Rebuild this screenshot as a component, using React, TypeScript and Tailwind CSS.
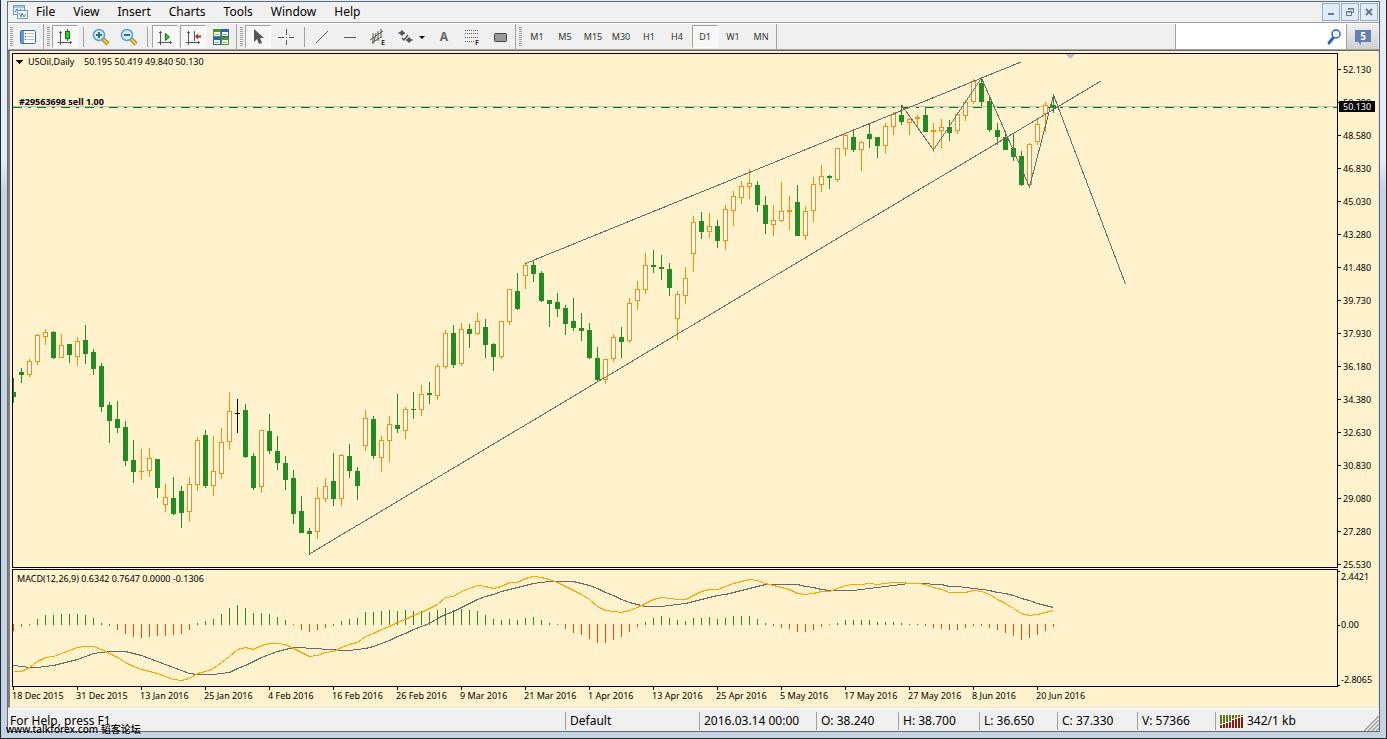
import type { ReactNode } from "react";
import clsx from "clsx";

type Candle = ["u" | "d" | "n", number, number, number, number];

// kind (up / down / neutral), high, body top, body bottom, low
const candles: Candle[] = [
    ["d", 378, 392, 397, 403], ["d", 368, 372, 375, 383], ["u", 359, 361, 375, 377],
    ["u", 334, 335, 362, 365], ["u", 329, 332, 337, 345], ["d", 331, 332, 358, 359],
    ["u", 334, 345, 358, 358], ["d", 344, 344, 355, 363], ["u", 337, 341, 357, 366],
    ["d", 325, 340, 354, 364], ["d", 349, 352, 369, 375], ["d", 363, 366, 407, 412],
    ["d", 402, 405, 421, 443], ["d", 401, 419, 428, 433], ["d", 421, 427, 461, 466],
    ["d", 440, 460, 472, 483], ["u", 449, 471, 472, 480], ["u", 448, 458, 471, 477],
    ["d", 459, 459, 488, 498], ["u", 484, 497, 505, 512], ["d", 477, 498, 514, 515],
    ["d", 486, 491, 513, 528], ["u", 477, 484, 512, 522], ["u", 437, 440, 485, 491],
    ["d", 430, 435, 486, 488], ["u", 436, 471, 486, 496], ["u", 428, 442, 474, 479],
    ["u", 392, 411, 442, 450], ["n", 399, 413, 414, 433], ["d", 404, 410, 457, 458],
    ["d", 453, 456, 488, 490], ["u", 430, 430, 487, 493], ["d", 414, 431, 451, 454],
    ["d", 436, 451, 463, 470], ["d", 456, 463, 480, 490], ["d", 470, 478, 514, 524],
    ["d", 496, 511, 533, 533], ["d", 528, 531, 534, 555], ["u", 487, 498, 532, 539],
    ["u", 478, 486, 499, 502], ["d", 453, 481, 499, 506], ["u", 454, 455, 499, 506],
    ["d", 444, 456, 471, 478], ["d", 467, 471, 486, 500], ["u", 410, 418, 446, 451],
    ["d", 416, 419, 456, 459], ["u", 436, 440, 458, 472], ["u", 416, 424, 441, 462],
    ["d", 394, 425, 429, 433], ["u", 407, 409, 431, 439], ["d", 392, 409, 410, 419],
    ["u", 385, 394, 410, 416], ["d", 382, 393, 395, 404], ["u", 364, 366, 396, 400],
    ["u", 330, 333, 367, 369], ["d", 325, 333, 365, 368], ["u", 323, 329, 364, 366],
    ["d", 324, 329, 334, 348], ["u", 313, 321, 334, 335], ["d", 319, 327, 345, 358],
    ["d", 343, 344, 357, 371], ["u", 321, 321, 357, 359], ["u", 289, 289, 322, 325],
    ["d", 273, 291, 309, 310], ["u", 262, 265, 276, 289], ["d", 261, 265, 274, 282],
    ["d", 271, 273, 301, 302], ["d", 300, 300, 304, 327], ["d", 293, 302, 309, 317],
    ["d", 305, 308, 324, 335], ["d", 298, 321, 328, 331], ["d", 313, 328, 331, 341],
    ["d", 323, 330, 358, 359], ["d", 347, 358, 380, 381], ["u", 359, 359, 380, 384],
    ["u", 334, 337, 359, 362], ["d", 327, 337, 342, 358], ["u", 298, 303, 341, 343],
    ["u", 281, 289, 301, 310], ["u", 253, 265, 290, 294], ["d", 250, 265, 267, 273],
    ["d", 255, 267, 269, 280], ["d", 263, 269, 288, 296], ["u", 291, 294, 319, 340],
    ["u", 267, 278, 296, 304], ["u", 216, 222, 254, 272], ["d", 212, 221, 232, 239],
    ["u", 213, 226, 232, 238], ["d", 220, 226, 241, 248], ["u", 205, 209, 241, 250],
    ["u", 191, 196, 211, 226], ["u", 181, 186, 198, 204], ["u", 169, 183, 187, 199],
    ["d", 181, 185, 205, 212], ["d", 196, 205, 224, 234], ["u", 205, 220, 225, 236],
    ["u", 182, 211, 221, 222], ["u", 196, 210, 212, 230], ["d", 185, 202, 236, 236],
    ["u", 206, 211, 236, 240], ["u", 177, 184, 211, 222], ["u", 165, 176, 185, 192],
    ["d", 175, 176, 178, 189], ["u", 148, 148, 180, 182], ["u", 133, 135, 149, 156],
    ["d", 129, 137, 150, 152], ["u", 141, 142, 150, 171], ["d", 123, 134, 139, 148],
    ["d", 137, 137, 146, 158], ["u", 123, 126, 146, 154], ["u", 112, 114, 127, 135],
    ["d", 105, 115, 122, 125], ["u", 118, 119, 123, 135], ["u", 115, 117, 119, 128],
    ["d", 107, 115, 132, 132], ["u", 123, 130, 132, 152], ["u", 119, 127, 131, 148],
    ["d", 120, 127, 133, 141], ["u", 112, 114, 131, 134], ["u", 100, 102, 116, 121],
    ["u", 79, 81, 102, 104], ["d", 78, 83, 102, 106], ["d", 97, 101, 130, 132],
    ["d", 123, 130, 137, 145], ["d", 134, 137, 150, 150], ["d", 134, 148, 157, 161],
    ["d", 151, 156, 185, 186], ["u", 143, 144, 185, 187], ["u", 120, 124, 142, 145],
    ["u", 102, 105, 114, 132], ["d", 96, 105, 108, 113],
];

// histogram: end of each bar, above 625 is positive
const histogram = [
    631, 627, 624, 619, 615, 615, 614, 614, 614, 615, 618, 623, 626, 630, 634, 637, 638, 637, 636, 636,
    635, 634, 630, 623, 621, 619, 614, 608, 605, 608, 613, 613, 614, 617, 620, 625, 630, 632, 630, 628,
    626, 621, 619, 618, 612, 612, 611, 610, 611, 610, 611, 611, 612, 610, 608, 610, 609, 610, 611, 615,
    619, 620, 619, 620, 618, 617, 620, 623, 625, 629, 633, 635, 639, 643, 643, 640, 637, 632, 627, 622,
    618, 616, 618, 620, 621, 618, 618, 617, 619, 618, 616, 616, 616, 619, 623, 626, 628, 629, 632, 632,
    630, 627, 625, 623, 620, 620, 620, 620, 622, 622, 622, 623, 624, 624, 626, 628, 629, 630, 630, 628,
    626, 626, 628, 630, 633, 636, 640, 638, 635, 631, 627,
];

const macdLine = [
    671, 671, 667, 661, 657, 656, 653, 650, 647, 646, 646, 649, 653, 657, 662, 666, 669, 671, 673, 676,
    679, 680, 678, 673, 671, 668, 662, 656, 649, 647, 649, 645, 643, 643, 644, 648, 652, 656, 655, 652,
    651, 647, 644, 642, 636, 633, 629, 626, 622, 619, 615, 612, 608, 604, 597, 596, 591, 588, 585, 586,
    588, 586, 582, 582, 578, 576, 577, 579, 582, 586, 590, 594, 599, 606, 610, 611, 612, 610, 607, 603,
    599, 597, 598, 599, 599, 595, 591, 589, 589, 586, 583, 581, 579, 580, 583, 585, 587, 589, 593, 594,
    593, 591, 591, 588, 585, 584, 584, 583, 584, 583, 582, 582, 583, 583, 584, 587, 589, 592, 592, 592,
    590, 591, 594, 599, 603, 608, 613, 615, 614, 612, 610,
];

const signalLine = [
    665, 666, 667, 667, 666, 665, 663, 661, 659, 656, 653, 652, 651, 651, 651, 653, 655, 658, 661, 664,
    667, 670, 673, 674, 674, 674, 673, 672, 668, 665, 661, 657, 654, 651, 649, 647, 647, 648, 648, 649,
    649, 650, 650, 649, 648, 646, 643, 640, 636, 633, 629, 626, 623, 618, 614, 611, 607, 603, 599, 596,
    594, 591, 589, 587, 585, 583, 582, 581, 581, 581, 581, 583, 585, 588, 592, 595, 599, 602, 604, 606,
    606, 606, 605, 604, 603, 601, 599, 597, 595, 594, 592, 590, 588, 586, 584, 584, 584, 584, 584, 586,
    587, 589, 590, 590, 590, 590, 589, 588, 587, 586, 585, 584, 583, 583, 583, 584, 584, 586, 586, 587,
    588, 589, 590, 592, 593, 595, 598, 600, 603, 605, 607,
];

const prices = [
    "52.130", "50.380", "48.580", "46.830", "45.030", "43.280", "41.480", "39.730",
    "37.930", "36.180", "34.380", "32.630", "30.830", "29.080", "27.280", "25.530",
];

const dates = [
    "18 Dec 2015", "31 Dec 2015", "13 Jan 2016", "25 Jan 2016", "4 Feb 2016", "16 Feb 2016",
    "26 Feb 2016", "9 Mar 2016", "21 Mar 2016", "1 Apr 2016", "13 Apr 2016", "25 Apr 2016",
    "5 May 2016", "17 May 2016", "27 May 2016", "8 Jun 2016", "20 Jun 2016",
];

const menus = ["File", "View", "Insert", "Charts", "Tools", "Window", "Help"];
const timeframes = ["M1", "M5", "M15", "M30", "H1", "H4", "D1", "W1", "MN"];

const colors = { u: "#ff8c00", d: "#228b22", n: "#000000" };

const barX = (i: number) => 13 + i * 8;

const toPoints = (values: number[]) =>
    values.map((y, i) => `${barX(i) + 0.5},${y + 0.5}`).join(" ");

function PricePlot() {
    return (
        <svg className="block h-[513px] w-full" shapeRendering="crispEdges">
            <g transform="translate(-13 -54)">
                <line x1="13" x2="9999" y1="106.5" y2="106.5" stroke="#c0c0c0" />
                <line x1="13" x2="9999" y1="107.5" y2="107.5" stroke="#008000" strokeDasharray="9 6 3 6" />
                <path d="M1066 54h9l-4 5h-1z" fill="#c0c0c0" />

                {candles.map(([kind, high, top, bottom, low], i) => {
                    const x = barX(i);
                    const color = colors[kind];
                    const hollow = kind === "u" && bottom - top > 2;
                    return (
                        <g key={i} fill={color}>
                            <rect x={x} y={high} width="1" height={low - high} />
                            <rect x={x - 2} y={top} width="5" height={bottom - top} />
                            {hollow && (
                                <rect x={x - 1} y={top + 1} width="3" height={bottom - top - 2} fill="#fff" />
                            )}
                        </g>
                    );
                })}

                <g fill="none" stroke="#696969">
                    <path d="M525.5 263.5L1021 62" />
                    <path d="M309.5 554L1101 81" />
                    <path d="M902 105.5L933.5 150L981.5 78L1029.5 187L1053.5 95L1125.5 284" />
                </g>

                <path d="M15 60h8l-4 4z" fill="#000" />
            </g>
            <g shapeRendering="auto">
                <text x="15" y="11" className="text-[9px]">USOil,Daily</text>
                <text x="71" y="11" className="text-[9px]">50.195 50.419 49.840 50.130</text>
                <text x="6" y="51" className="text-[9px] font-bold">#29563698 sell 1.00</text>
            </g>
        </svg>
    );
}

function MacdPlot() {
    return (
        <svg className="block h-[116px] w-full" shapeRendering="crispEdges">
            <g transform="translate(-13 -570)">
                {histogram.map((end, i) => {
                    const up = end < 625;
                    return (
                        <rect
                            key={i}
                            x={barX(i)}
                            y={up ? end : 624}
                            width="1"
                            height={up ? 625 - end : end - 624}
                            fill={up ? "#228b22" : "#ff4500"}
                        />
                    );
                })}
                <polyline points={toPoints(signalLine)} fill="none" stroke="#696969" />
                <polyline points={toPoints(macdLine)} fill="none" stroke="#ffa500" />
            </g>
            <text x="4" y="12" className="text-[9px]">
                MACD(12,26,9) 0.6342 0.7647 0.0000 -0.1306
            </text>
        </svg>
    );
}

function PriceAxis() {
    return (
        <svg className="block h-[515px] w-10 shrink-0 overflow-visible">
            {prices.map((price, i) => (
                <g key={price}>
                    <rect y={16 + i * 33} width="3" height="1" />
                    <text x="5" y={20 + i * 33} className="text-[9px]">{price}</text>
                </g>
            ))}
            <rect x="1" y="48" width="36" height="11" />
            <text x="5" y="57" className="text-[9px]" fill="#fff">50.130</text>
        </svg>
    );
}

function MacdAxis() {
    return (
        <svg className="block h-[118px] w-10 shrink-0 overflow-visible">
            <rect y="2" width="2" height="1" />
            <rect y="56" width="2" height="1" />
            <rect y="116" width="2" height="1" />
            <text x="3" y="11" className="text-[9px]">2.4421</text>
            <text x="3" y="59" className="text-[9px]">0.00</text>
            <text x="3" y="114" className="text-[9px]">-2.8065</text>
        </svg>
    );
}

function DateAxis() {
    return (
        <svg className="block h-[20px] w-full">
            {dates.map((date, i) => (
                <g key={date}>
                    <rect x={1 + i * 64} width="1" height="3" />
                    <text x={i * 64} y="12" className="text-[9px]">{date}</text>
                </g>
            ))}
        </svg>
    );
}

function Grip() {
    return (
        <div className="flex w-[6px] items-center pl-[2px]">
            <div className="h-[19px] w-[3px] bg-[repeating-linear-gradient(#a0a0a0_0_1px,#f0f0f0_1px_2px)]" />
        </div>
    );
}

function BandEnd() {
    return <div className="mx-px w-px bg-[#a0a0a0]" />;
}

function Divider() {
    return (
        <div className="flex w-2 items-center justify-center">
            <div className="h-5 w-px bg-[#a0a0a0]" />
        </div>
    );
}

interface ToolProps {
    label: string;
    active?: boolean;
    wide?: boolean;
    children: ReactNode;
}

function Tool({ label, active, wide, children }: ToolProps) {
    return (
        <button
            type="button"
            aria-label={label}
            aria-pressed={active}
            className={clsx(
                "flex h-[25px] items-center justify-center",
                wide ? "w-[38px]" : "w-7",
            )}
        >
            <span
                className={clsx(
                    "flex h-[23px] items-center justify-center border",
                    wide ? "w-[36px]" : "w-[26px]",
                    active
                        ? "border-t-[#a0a0a0] border-r-white border-b-white border-l-[#a0a0a0] bg-[#f7f7f7]"
                        : "border-transparent",
                )}
            >
                {children}
            </span>
        </button>
    );
}

function Icon({ children, w = 18 }: { children: ReactNode; w?: number }) {
    return (
        <svg width={w} height="18" viewBox={`0 0 ${w} 18`} fill="none" className="shrink-0">
            {children}
        </svg>
    );
}

function AxesGlyph() {
    return (
        <g fill="#555" shapeRendering="crispEdges">
            <rect x="4" y="3" width="1" height="14" />
            <rect x="2" y="14" width="14" height="1" />
            <rect x="3" y="4" width="3" height="1" />
            <rect x="14" y="13" width="1" height="3" />
        </g>
    );
}

function Magnifier({ plus }: { plus?: boolean }) {
    return (
        <Icon>
            <path d="M11 11l5 5" stroke="#a87b10" strokeWidth="4" />
            <path d="M11 11l5 5" stroke="#f2cf4a" strokeWidth="2" />
            <circle cx="7" cy="7" r="5.500" fill="#d4ecfa" stroke="#5a9fd0" strokeWidth="1.500" />
            <path d="M4 7h6" stroke="#2f6f96" strokeWidth="2" />
            {plus && <path d="M7 4v6" stroke="#2f6f96" strokeWidth="2" />}
        </Icon>
    );
}

function Toolbar() {
    return (
        <div className="flex h-[25px] bg-[#f0f0f0] pr-px">
            <Grip />
            <Tool label="Navigator">
                <Icon>
                    <rect x="1.500" y="2.500" width="15" height="13" rx="1" fill="#fff" stroke="#2f6fae" />
                    <rect x="2" y="3" width="3" height="12" fill="#5f9bd3" />
                    <path d="M6 5.500h1M6 8.500h1M6 11.500h1" stroke="#d00" />
                    <path d="M8 5.500h7M8 8.500h7M8 11.500h7" stroke="#b4bfca" />
                </Icon>
            </Tool>
            <BandEnd />
            <Grip />
            <Tool label="Candlesticks" active>
                <Icon>
                    <AxesGlyph />
                    <path d="M11.500 1v12" stroke="#067a06" />
                    <rect x="9.500" y="3.500" width="4" height="7" fill="#2fd12f" stroke="#067a06" />
                </Icon>
            </Tool>
            <Divider />
            <Tool label="Zoom in"><Magnifier plus /></Tool>
            <Tool label="Zoom out"><Magnifier /></Tool>
            <Divider />
            <Tool label="Auto scroll" active>
                <Icon>
                    <AxesGlyph />
                    <path d="M9.500 5.500v7l4-3.500z" fill="#2fd12f" stroke="#067a06" />
                </Icon>
            </Tool>
            <Tool label="Chart shift" active>
                <Icon>
                    <AxesGlyph />
                    <path d="M10.500 3v10" stroke="#2a6a9a" />
                    <path d="M11 8.500l3-3v2h3v2h-3v2z" fill="#b83200" />
                </Icon>
            </Tool>
            <Tool label="Tile windows">
                <Icon>
                    <path d="M1 1h8v8H1zM9 9h8v8H9z" fill="#4a9a1a" />
                    <path d="M9 1h8v8H9zM1 9h8v8H1z" fill="#2a5fc8" />
                    <path d="M2 4h6v4H2zM10 4h6v4h-6zM2 12h6v4H2zM10 12h6v4h-6z" fill="#f4faf0" />
                    <path d="M3 6.500h4M11 6.500h4M3 14.500h4M11 14.500h4" stroke="#8fb88a" />
                </Icon>
            </Tool>
            <BandEnd />
            <Grip />
            <Tool label="Cursor" active>
                <Icon>
                    <path d="M5 1v13l3-3 2 5 3-1-2-5h4z" fill="#555" />
                </Icon>
            </Tool>
            <Tool label="Crosshair">
                <Icon>
                    <path d="M1 9.500h6M12 9.500h5M9 9.500h1M9.500 1v6M9.500 12v5" stroke="#555" />
                </Icon>
            </Tool>
            <Divider />
            <Tool label="Trendline">
                <Icon><path d="M3 15L15 3" stroke="#555" /></Icon>
            </Tool>
            <Tool label="Horizontal line">
                <Icon><path d="M3 9.500h12" stroke="#555" /></Icon>
            </Tool>
            <Tool label="Equidistant channel">
                <Icon>
                    <path d="M1 12L14 3M3 15L12 9M4 5v11M7 5l-2 9M9 3v10M12 1v9" stroke="#555" />
                    <text x="12" y="17" fill="#333" className="text-[7px] font-bold">E</text>
                </Icon>
            </Tool>
            <Tool label="Arrows" wide>
                <Icon w={28}>
                    <path d="M5 2l3 3-3 3-3-3zM12 9l3 3-3 3-3-3z" fill="#555" />
                    <path d="M1 5h7M9 12h7" stroke="#555" />
                    <path d="M5 10l2 2 4-5" stroke="#555" strokeWidth="1.500" />
                    <path d="M22 8h6l-3 3z" fill="#000" />
                </Icon>
            </Tool>
            <Tool label="Text">
                <span className="text-xs font-bold text-[#666]">A</span>
            </Tool>
            <Tool label="Fibonacci">
                <Icon>
                    <path d="M2 2.500h13M2 5.500h13M2 9.500h13M2 13.500h9" stroke="#555" strokeDasharray="1 1" />
                    <text x="12" y="17" fill="#333" className="text-[7px] font-bold">F</text>
                </Icon>
            </Tool>
            <Tool label="Rectangle">
                <Icon>
                    <rect x="3.500" y="5.500" width="12" height="8" rx="1" fill="#999" stroke="#444" />
                </Icon>
            </Tool>
            <BandEnd />
            <Grip />
            {timeframes.map((tf) => (
                <Tool key={tf} label={tf} active={tf === "D1"}>
                    <span className="text-[9px] text-[#333]">{tf}</span>
                </Tool>
            ))}
            <BandEnd />
            <div className="flex-1" />
            <label className="flex w-[171px] items-center border-l border-[#a0a0a0] bg-white pr-1">
                <input type="text" aria-label="Search" className="min-w-0 flex-1 bg-white outline-none" />
                <Icon w={16}>
                    <path d="M7 10l-4 5" stroke="#2f62c8" strokeWidth="3" strokeLinecap="round" />
                    <circle cx="10" cy="6" r="4" fill="#f4f8ff" stroke="#2f62c8" strokeWidth="1.500" />
                </Icon>
            </label>
            <button
                type="button"
                aria-label="Messages"
                className="flex w-8 items-center justify-center border-l border-[#a0a0a0] bg-linear-to-b from-[#f0f0f0] to-[#cfcfcf]"
            >
                <svg width="18" height="18" viewBox="0 0 18 18">
                    <path d="M1 2h16v12H7v3l-3-3H1z" fill="#6580b0" />
                    <text x="9" y="12" textAnchor="middle" fill="#fff" className="text-[10px] font-bold">5</text>
                </svg>
            </button>
        </div>
    );
}

function WindowButton({ label, children }: { label: string; children: ReactNode }) {
    return (
        <button
            type="button"
            aria-label={label}
            className="flex h-[18px] w-[18px] items-center justify-center border border-[#9aacbf] bg-[#dfecf9]"
        >
            <svg width="10" height="10" viewBox="0 0 10 10" fill="none" stroke="#6a7787">
                {children}
            </svg>
        </button>
    );
}

function MenuBar() {
    return (
        <div className="flex h-5 items-center bg-[#f0f0f0] pr-px pl-[5px]">
            <svg width="16" height="16" viewBox="0 0 16 16" fill="none" className="mr-[7px]">
                <rect x="0.500" y="1.500" width="11" height="9" fill="#e6f0fc" stroke="#6b9ad6" />
                <path d="M1 3h10" stroke="#6b9ad6" />
                <path d="M2 8l2-3 2 3 2-3" stroke="#3d78c4" />
                <rect x="4.500" y="6.500" width="10" height="8" fill="#fff" stroke="#6b9ad6" />
                <path d="M6 9l2 4 1-4 2 4 2-3" stroke="#3d78c4" />
            </svg>
            <nav className="flex flex-1 gap-[18px] text-xs">
                {menus.map((menu) => (
                    <button key={menu} type="button">{menu}</button>
                ))}
            </nav>
            <div className="flex gap-px">
                <WindowButton label="Minimize">
                    <path d="M2 7h6" strokeWidth="2" />
                </WindowButton>
                <WindowButton label="Restore">
                    <path d="M3.500 3V1.500h5v4H7M3 2h6" />
                    <path d="M1.500 4.500h5v4h-5zM1 5h6" />
                </WindowButton>
                <WindowButton label="Close">
                    <path d="M2 2l6 6M8 2l-6 6" strokeWidth="2" />
                </WindowButton>
            </div>
        </div>
    );
}

function StatusCell({ className, children }: { className: string; children: ReactNode }) {
    return (
        <div className={clsx("flex shrink-0 items-center border-l border-[#a0a0a0] pl-1", className)}>
            {children}
        </div>
    );
}

function StatusBar() {
    return (
        <footer className="relative flex h-[22px] bg-[#f0f0f0] pt-[3px] pb-px text-xs">
            <div className="flex flex-1 items-center pl-[2px]">For Help, press F1</div>
            <StatusCell className="w-[134px]">Default</StatusCell>
            <StatusCell className="w-[117px]">2016.03.14 00:00</StatusCell>
            <StatusCell className="w-[82px]">O: 38.240</StatusCell>
            <StatusCell className="w-[81px]">H: 38.700</StatusCell>
            <StatusCell className="w-[78px]">L: 36.650</StatusCell>
            <StatusCell className="w-[80px]">C: 37.330</StatusCell>
            <StatusCell className="w-[78px]">V: 57366</StatusCell>
            <StatusCell className="w-[164px]">
                <svg width="23" height="13" className="mr-1" shapeRendering="crispEdges">
                    {[10, 9, 8, 7, 5, 4, 3, 2].map((split, i) => (
                        <g key={i}>
                            <rect x={i * 3} width="2" height={split - 1} fill="#5a7a12" />
                            <rect x={i * 3} y={split} width="2" height={13 - split} fill="#8b1a0e" />
                        </g>
                    ))}
                </svg>
                342/1 kb
            </StatusCell>
            <svg width="15" height="15" className="absolute right-0 bottom-0" stroke="#a0a0a0" strokeWidth="1.500">
                <path d="M0 15L15 0M4 15L15 4M8 15L15 8M12 15L15 12" />
            </svg>
            <span className="absolute -bottom-1 -left-[2px] text-[10px] leading-3 font-medium">
                www.talkforex.com 韬客论坛
            </span>
        </footer>
    );
}

export default function App() {
    return (
        <div className="min-h-screen overflow-hidden border-x border-b border-[#1e2a36] bg-[#33485c] font-['Noto_Sans','Noto_Sans_CJK_SC',sans-serif] text-black">
            <div className="flex min-h-[calc(100vh-1px)] flex-col bg-[linear-gradient(#e6edf4_0_160px,#c5d3e3_190px_100%)] px-[6px] pt-px pb-[6px]">
                <div className="flex flex-1 flex-col border border-[#5d6b7a] bg-[#f0f0f0]">
                    <MenuBar />
                    <div className="border-t border-b border-t-[#a0a0a0] border-b-white" />
                    <Toolbar />
                    <div className="border-t border-b border-t-[#a0a0a0] border-b-[#696969]" />
                    <main className="flex flex-1 flex-col border-r border-b border-l-2 border-r-[#e3e3e3] border-b-[#e3e3e3] border-l-[#808080] bg-[#fff2cc] pt-[2px] pl-[2px]">
                        <div className="flex">
                            <div className="min-w-0 flex-1 border border-black">
                                <PricePlot />
                            </div>
                            <PriceAxis />
                        </div>
                        <div className="mt-px flex">
                            <div className="min-w-0 flex-1 border border-black">
                                <MacdPlot />
                            </div>
                            <MacdAxis />
                        </div>
                        <DateAxis />
                    </main>
                    <div className="h-px bg-white" />
                    <StatusBar />
                </div>
            </div>
        </div>
    );
}
